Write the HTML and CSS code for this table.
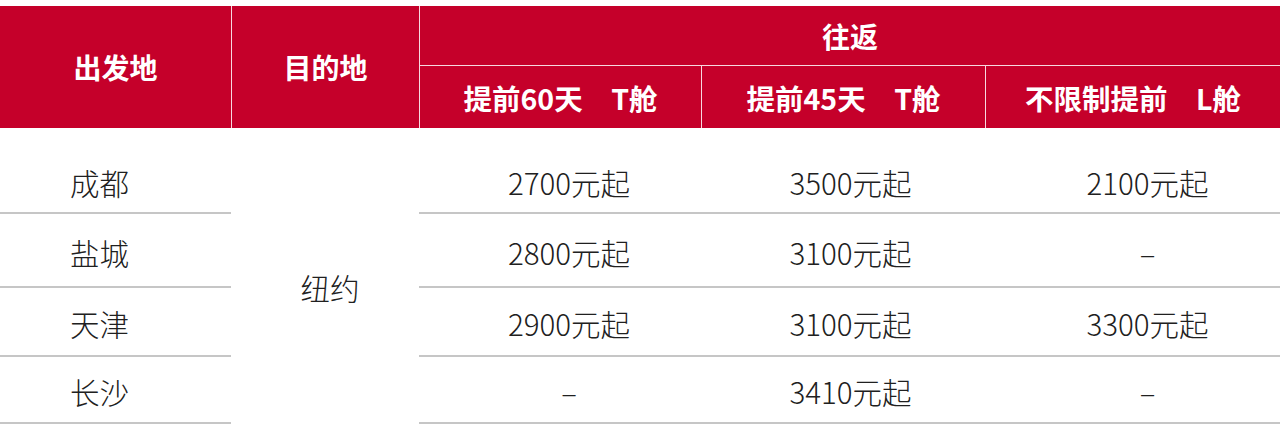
FILE: index.html
```html
<!DOCTYPE html>
<html lang="zh-CN">
<head>
<meta charset="utf-8">
<title>航线价格</title>
<link rel="stylesheet" href="styles.css">
</head>
<body>
<div class="table">
  <div class="head">
    <div class="h h-from">出发地</div>
    <div class="h h-to">目的地</div>
    <div class="h h-round">往返</div>
    <div class="h h-sub">提前60天　T舱</div>
    <div class="h h-sub">提前45天　T舱</div>
    <div class="h h-sub">不限制提前　L舱</div>
  </div>
  <div class="body">
    <div class="c from first">成都</div>
    <div class="c dest">纽约</div>
    <div class="c p1 first">2700元起</div>
    <div class="c p2 first">3500元起</div>
    <div class="c p3 first">2100元起</div>

    <div class="c from">盐城</div>
    <div class="c p1">2800元起</div>
    <div class="c p2">3100元起</div>
    <div class="c p3">–</div>

    <div class="c from">天津</div>
    <div class="c p1">2900元起</div>
    <div class="c p2">3100元起</div>
    <div class="c p3">3300元起</div>

    <div class="c from">长沙</div>
    <div class="c p1">–</div>
    <div class="c p2">3410元起</div>
    <div class="c p3">–</div>
  </div>
</div>
</body>
</html>
```

FILE: styles.css
```css
html, body {
  margin: 0;
  padding: 0;
  background: #ffffff;
}

body {
  font-family: "Noto Sans CJK SC", "Noto Sans", sans-serif;
  width: 1280px;
  height: 426px;
  overflow: hidden;
}

.table {
  padding-top: 6px;
}

.head {
  display: grid;
  grid-template-columns: 231px 188px 282px 284px 1fr;
  grid-template-rows: 60px 62px;
  background: #c5002a;
  color: #ffffff;
}

.h {
  box-sizing: border-box;
  display: flex;
  align-items: center;
  justify-content: center;
  font-size: 28px;
  font-weight: 700;
  white-space: pre;
}

.h-from {
  grid-column: 1;
  grid-row: 1 / span 2;
}

.h-to {
  grid-column: 2;
  grid-row: 1 / span 2;
  border-left: 1px solid rgba(255, 255, 255, 0.85);
}

.h-round {
  grid-column: 3 / span 3;
  grid-row: 1;
  border-left: 1px solid rgba(255, 255, 255, 0.85);
  border-bottom: 1px solid rgba(255, 255, 255, 0.85);
}

.h-sub {
  grid-row: 2;
  border-left: 1px solid rgba(255, 255, 255, 0.85);
  font-size: 28.5px;
}

.body {
  display: grid;
  grid-template-columns: 231px 188px 282px 284px 1fr;
  grid-template-rows: 86px 74px 69px 67px;
  color: #202020;
  font-size: 29.5px;
  font-weight: 300;
}

.c {
  box-sizing: border-box;
  display: flex;
  align-items: center;
  justify-content: center;
  border-bottom: 2px solid #c6c6c6;
  padding-top: 3px;
}

.c.first {
  padding-top: 24px;
}

.from {
  grid-column: 1;
  padding-right: 32px;
}

.dest {
  grid-column: 2;
  grid-row: 1 / span 4;
  border-bottom: none;
  padding-top: 22px;
  padding-left: 10px;
}

.p1 {
  grid-column: 3;
  padding-left: 18px;
}

.p2 {
  grid-column: 4;
  padding-left: 15px;
}

.p3 {
  grid-column: 5;
  padding-left: 30px;
}
```
